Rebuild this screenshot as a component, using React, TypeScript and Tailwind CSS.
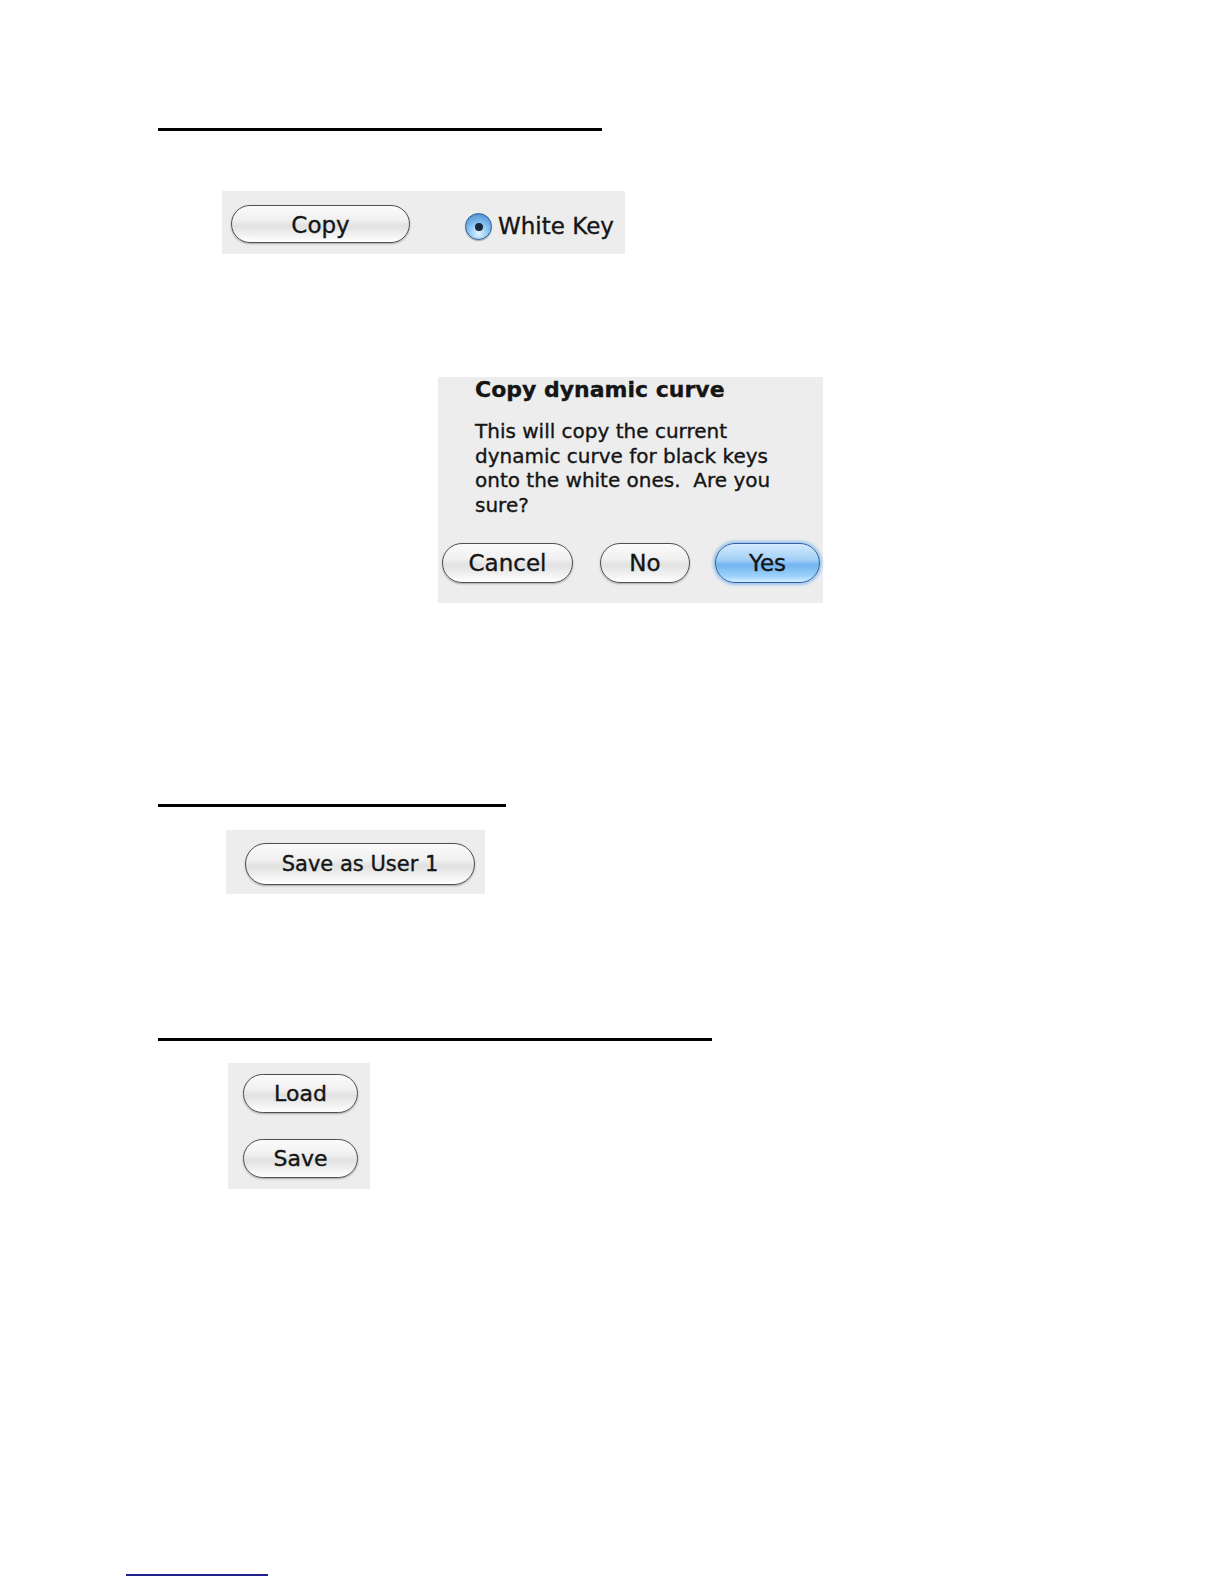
import React from 'react';

type PillProps = { label: string; className?: string; primary?: boolean };

// Aqua style pill button
function Pill({ label, className = '', primary = false }: PillProps) {
  const skin = primary
    ? 'border-[#2f5f9e] bg-[linear-gradient(to_bottom,#d3ebfd_0%,#a3d0f7_42%,#72b4ef_55%,#9dd2fb_85%,#d2efff_100%)] shadow-[0_0_3px_2px_rgba(90,160,235,0.55)]'
    : 'border-[#4f4f4f] bg-[linear-gradient(to_bottom,#fbfbfb_0%,#f0f0f0_40%,#e1e1e1_55%,#f1f1f1_80%,#ffffff_100%)] shadow-[0_1px_2px_rgba(0,0,0,0.3)]';
  return (
    <button
      type="button"
      className={`flex shrink-0 items-center justify-center rounded-full border-[1.5px] leading-none text-[#141414] ${skin} ${className}`}
    >
      {label}
    </button>
  );
}

function Radio() {
  return (
    <span className="flex h-[27px] w-[27px] shrink-0 items-center justify-center rounded-full border border-[#2d5c92] bg-[radial-gradient(circle_at_50%_78%,#dff3ff_0%,#86c3f2_45%,#3f82c9_100%)] shadow-[0_1px_1px_rgba(0,0,0,0.3)]">
      <span className="h-[8px] w-[8px] rounded-full bg-[#1a283a]" />
    </span>
  );
}

export default function App() {
  return (
    <div className="min-h-[1584px] overflow-hidden bg-white pt-[128px] font-['DejaVu_Sans','Liberation_Sans',sans-serif] text-[#151515] [-webkit-text-stroke:0.35px_#151515]">
      {/* section 1 */}
      <div className="ml-[158px] h-[3px] w-[444px] bg-black" />
      <div className="ml-[222px] mt-[60px] flex h-[63px] w-[403px] items-center bg-[#ededed] pl-[9px] pt-[2px]">
        <Pill label="Copy" className="h-[38px] w-[179px] pt-[4px] text-[23px]" />
        <div className="ml-[55px] mt-[6px] flex items-center">
          <Radio />
          <span className="ml-[6px] text-[23px] leading-none">White Key</span>
        </div>
      </div>

      {/* confirm dialog */}
      <div className="ml-[438px] mt-[123px] h-[226px] w-[385px] bg-[#ededed] pl-[4px]">
        <div className="pl-[33px] text-[22px] font-bold leading-[25px]">Copy dynamic curve</div>
        <div className="mt-[17px] whitespace-pre pl-[33px] text-[20px] leading-[24.6px]">
          <div>This will copy the current</div>
          <div>dynamic curve for black keys</div>
          <div>onto the white ones.  Are you</div>
          <div>sure?</div>
        </div>
        <div className="mt-[26px] flex">
          <Pill label="Cancel" className="h-[40px] w-[131px] text-[23px]" />
          <Pill label="No" className="ml-[27px] h-[40px] w-[90px] text-[23px]" />
          <Pill label="Yes" primary className="ml-[25px] h-[40px] w-[105px] text-[23px]" />
        </div>
      </div>

      {/* section 2 */}
      <div className="ml-[158px] mt-[201px] h-[3px] w-[348px] bg-black" />
      <div className="ml-[226px] mt-[23px] h-[64px] w-[259px] bg-[#ededed] pl-[19px] pt-[13px]">
        <Pill label="Save as User 1" className="h-[42px] w-[230px] text-[21px]" />
      </div>

      {/* section 3 */}
      <div className="ml-[158px] mt-[144px] h-[3px] w-[554px] bg-black" />
      <div className="ml-[228px] mt-[22px] flex h-[126px] w-[142px] flex-col bg-[#ededed] pl-[15px] pt-[11px]">
        <Pill label="Load" className="h-[39px] w-[115px] text-[22px]" />
        <Pill label="Save" className="mt-[26px] h-[39px] w-[115px] text-[22px]" />
      </div>

      {/* footnote link rule */}
      <div className="ml-[126px] mt-[385px] h-[2px] w-[142px] bg-[#20208c]" />
    </div>
  );
}
